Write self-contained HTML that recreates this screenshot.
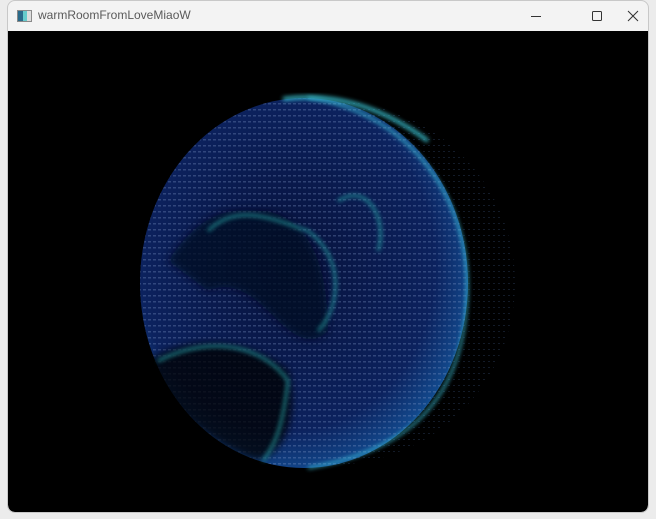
<!DOCTYPE html>
<html><head><style>
html,body{margin:0;padding:0;width:656px;height:519px;overflow:hidden;background:#ececec;}
.win{position:absolute;left:7px;top:0;width:642px;height:513px;background:#f3f3f3;border:1px solid #c8c8c8;border-radius:8px;box-sizing:border-box;overflow:hidden;}
.title{position:absolute;left:30px;top:7px;font:12px "Liberation Sans",sans-serif;color:#5a5a5a;}
.icon{position:absolute;left:9px;top:9px;width:13px;height:10px;border:1px solid #8a8a8a;background:linear-gradient(90deg,#2a6a8a 0 40%,#6cc 40% 70%,#ddd 70%);}
.content{position:absolute;left:0;top:30px;width:640px;height:481px;background:#000;border-radius:0 0 7px 7px;overflow:hidden;}
</style></head><body>
<div class="win">
<div class="icon"></div>
<div class="title">warmRoomFromLoveMiaoW</div>
<svg style="position:absolute;left:518px;top:6px" width="120" height="20">
<line x1="5" y1="9.5" x2="15" y2="9.5" stroke="#333" stroke-width="1"/>
<rect x="66.5" y="4.5" width="9" height="9" fill="none" stroke="#333" rx="1"/>
<path d="M102 4 L112 14 M112 4 L102 14" stroke="#333"/>
</svg>
<div class="content">
<svg width="640" height="481">
<defs>
<radialGradient id="g" cx="0.45" cy="0.45" r="0.6">
<stop offset="0" stop-color="#07113a"/>
<stop offset="0.75" stop-color="#0c225e"/>
<stop offset="0.95" stop-color="#134a8e"/>
<stop offset="1" stop-color="#28a8d0"/>
</radialGradient>
<pattern id="p" width="5" height="6" patternUnits="userSpaceOnUse">
<rect x="0" y="0" width="3" height="1.5" fill="#8aa0d0" opacity="0.3"/>
</pattern>
<pattern id="p2" width="5" height="6" patternUnits="userSpaceOnUse">
<rect x="0" y="0" width="2" height="1" fill="#4a6aa0" opacity="0.25"/>
</pattern>
<filter id="b"><feGaussianBlur stdDeviation="4"/></filter>
<filter id="b2"><feGaussianBlur stdDeviation="2"/></filter>
</defs>
<ellipse cx="322" cy="252" rx="185" ry="182" fill="url(#p2)"/>
<ellipse cx="296" cy="252" rx="164" ry="185" fill="url(#g)"/>
<ellipse cx="296" cy="252" rx="164" ry="185" fill="url(#p)"/>
<g filter="url(#b)" opacity="0.75">
<path d="M160 230 C200 170 230 180 260 180 C300 190 320 230 320 300 C300 320 280 300 260 280 C240 260 220 250 200 260 Z" fill="#040b22"/>
<path d="M140 330 C170 310 230 300 280 340 C290 380 280 420 250 430 C210 420 170 380 140 360 Z" fill="#010406"/>
</g>
<g filter="url(#b2)" opacity="0.7" fill="none" stroke="#28a8a8" stroke-width="3">
<path d="M200 200 C230 170 270 190 300 200"/>
<path d="M300 200 C340 230 330 280 310 300"/>
<path d="M150 330 C210 300 260 320 280 350 C275 390 270 410 255 430"/>
<path d="M330 170 C360 150 380 190 370 220"/>
</g>
<path d="M275 68 C330 60 380 80 420 110" stroke="#40d8e8" stroke-width="4" fill="none" filter="url(#b2)" opacity="0.8"/>
<path d="M300 67 C400 80 470 170 458 280 C450 370 400 420 300 437" stroke="#3fd0e8" stroke-width="2.5" fill="none" filter="url(#b2)" opacity="0.8"/>
</svg>
</div>
</div>
</body></html>
